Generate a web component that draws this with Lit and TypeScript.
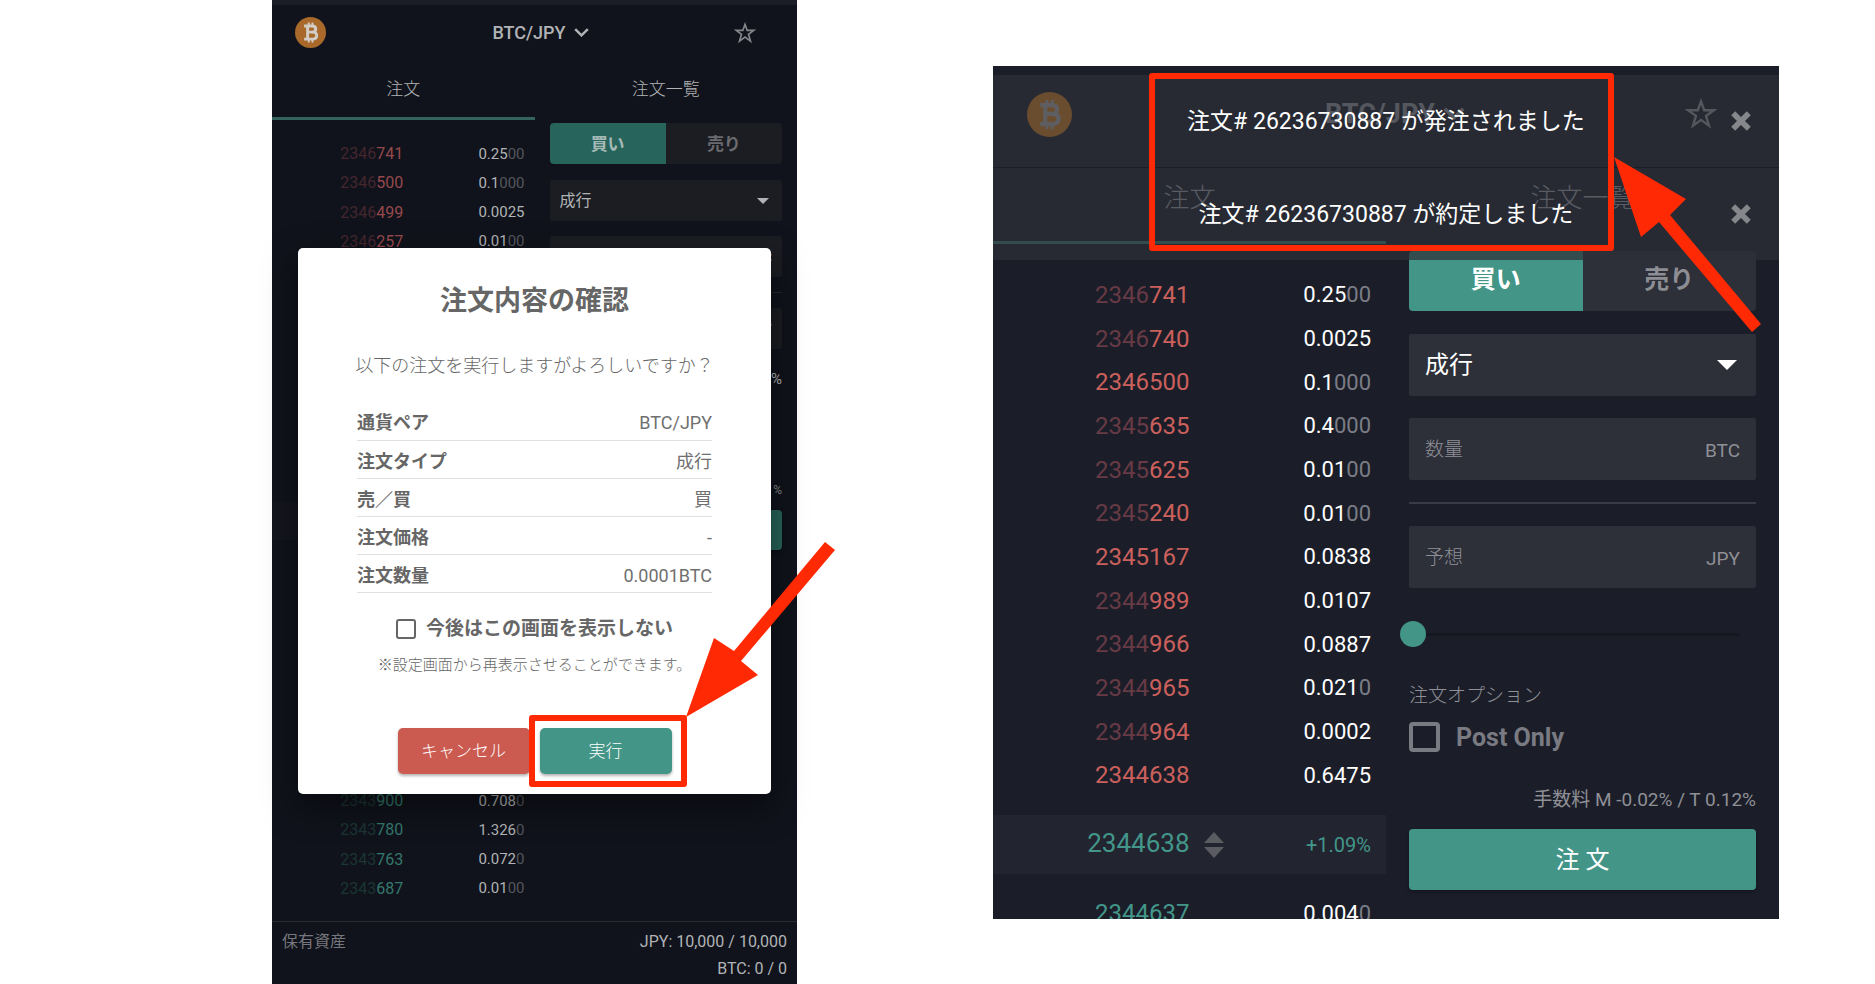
import { LitElement, html, css } from "lit";
import { customElement } from "lit/decorators.js";

// [faded price digits, bright price digits, size, trailing zeros of the size]
type Row = [string, string, string, string];

const leftAsks: Row[] = [
  ["2346", "741", "0.25", "00"],
  ["2346", "500", "0.1", "000"],
  ["2346", "499", "0.0025", ""],
  ["2346", "257", "0.01", "00"],
];
const leftBids: Row[] = [
  ["2343", "900", "0.708", "0"],
  ["2343", "780", "1.326", "0"],
  ["2343", "763", "0.072", "0"],
  ["2343", "687", "0.01", "00"],
];
const rightAsks: Row[] = [
  ["2346", "741", "0.25", "00"],
  ["2346", "740", "0.0025", ""],
  ["", "2346500", "0.1", "000"],
  ["2345", "635", "0.4", "000"],
  ["2345", "625", "0.01", "00"],
  ["2345", "240", "0.01", "00"],
  ["", "2345167", "0.0838", ""],
  ["2344", "989", "0.0107", ""],
  ["2344", "966", "0.0887", ""],
  ["2344", "965", "0.021", "0"],
  ["2344", "964", "0.0002", ""],
  ["", "2344638", "0.6475", ""],
];
const rightBids: Row[] = [["", "2344637", "0.004", "0"]];

const details: [string, string][] = [
  ["通貨ペア", "BTC/JPY"],
  ["注文タイプ", "成行"],
  ["売／買", "買"],
  ["注文価格", "-"],
  ["注文数量", "0.0001BTC"],
];

const coin = html`<svg class="coin" viewBox="0 0 32 32" aria-hidden="true">
  <circle cx="16" cy="16" r="16" class="coin-disc" />
  <g fill="none" class="coin-mark" stroke-width="3">
    <path d="M9.4 9.3H17.6C20.4 9.3 21.4 10.8 21.4 12.4C21.4 14.3 20.2 15.6 17.8 15.6H13.4M17.8 15.6C21 15.6 22.4 17.1 22.4 19.1C22.4 21.4 20.8 22.8 18 22.8H9.4M13 9.3V22.8" />
    <path d="M14.2 5.6V9.6M18 5.6V9.6M14.2 22.4V26.4M18 22.4V26.4" stroke-width="2" />
  </g>
</svg>`;

const star = html`<svg class="star-svg" viewBox="0 0 24 24" fill="none" stroke="currentColor" stroke-width="1.8" aria-hidden="true">
  <path d="M12 2.6L14.4 9.2H21.6L15.8 13.4L18 20.8L12 16.4L6 20.8L8.2 13.4L2.4 9.2H9.6Z" />
</svg>`;

const chevron = html`<svg class="chevron" viewBox="0 0 15 9" fill="none" stroke="currentColor" stroke-width="2.4" aria-hidden="true">
  <path d="M1.2 1.2L7.5 7.4L13.8 1.2" />
</svg>`;

const cross = html`<svg class="cross" viewBox="0 0 20 20" stroke="currentColor" stroke-width="5.6" aria-hidden="true">
  <path d="M2.2 2.2L17.8 17.8M17.8 2.2L2.2 17.8" />
</svg>`;

@customElement("app-root")
export class AppRoot extends LitElement {
  static styles = css`
    :host {
      display: grid;
      grid-template-columns: 272fr 525fr 196fr 786fr 96fr;
      align-items: start;
      min-height: 100vh;
      background: #fff;
      font-family: Roboto, "Noto Sans CJK JP", sans-serif;
      overflow: hidden;
    }
    * { box-sizing: border-box; }
    button, input, select {
      font: inherit;
      color: inherit;
      margin: 0;
      padding: 0;
      border: 0;
      background: none;
    }
    svg { display: block; flex: none; }

    .screen {
      position: relative;
      display: flex;
      flex-direction: column;
      background: var(--bg);
      color: var(--text);
    }
    .before {
      grid-column: 2;
      min-height: 100vh;
      border-top: 5px solid #1b1e29;
      --bg: #10131b;
      --text: #b2b3b6;
      --muted: #85868a;
      --faint: #55575e;
      --ask: #96494d;
      --ask-dim: #45262f;
      --bid: #34776c;
      --bid-dim: #1b3534;
      --green: #27645b;
      --field: #1b1d22;
      --rule: #25272d;
      --band: #14161d;
      --disc: #a8692a;
      --coin: 31px;
      --edge: 23px;
      --star: 22px;
      --star-gap: 18px;
      --title: 18px;
      --title-shift: 12px;
      --head-h: 55px;
      --tab-h: 60px;
      --tab: 17px;
      --price: 16px;
      --size: 15px;
      --pad: 10px;
      --gap: 15px;
      --form-pad: 3px 15px 0;
      --seg-h: 41px;
      --seg: 17px;
      --field-h: 41px;
      --field-pad: 10px;
      --small: 14px;
      --lift: 3px;
    }
    .after {
      grid-column: 4;
      height: 853px;
      margin-top: 66px;
      --bg: #1b1e29;
      --text: #fff;
      --muted: #8f9096;
      --faint: #7b7d86;
      --ask: #cb605c;
      --ask-dim: #673a45;
      --bid: #43968a;
      --bid-dim: #2b5a58;
      --green: #439587;
      --field: #2d2f39;
      --rule: #393b46;
      --band: #22242f;
      --disc: #f7931a;
      --coin: 45px;
      --edge: 34px;
      --star: 32px;
      --star-gap: 28px;
      --title: 27px;
      --title-shift: 18px;
      --head-h: 80px;
      --tab-h: 90px;
      --tab: 26px;
      --price: 24px;
      --size: 22px;
      --pad: 15px;
      --gap: 22px;
      --form-pad: 7px 23px 0;
      --seg-h: 60px;
      --seg: 25px;
      --field-h: 62px;
      --field-pad: 16px;
      --small: 19px;
      --lift: 4px;
    }
    .clip {
      display: flex;
      flex-direction: column;
      flex: 1;
      min-height: 0;
      overflow: hidden;
    }
    .after .clip { padding-top: 8px; }

    .head {
      display: grid;
      grid-template-columns: 1fr auto 1fr;
      align-items: center;
      flex: none;
      height: var(--head-h);
      padding: 0 var(--edge);
    }
    .coin { width: var(--coin); height: var(--coin); }
    .coin-disc { fill: var(--disc); }
    .coin-mark { stroke: #d2cdc6; }
    .pair {
      display: flex;
      align-items: center;
      gap: 8px;
      padding-left: var(--title-shift);
      font-size: var(--title);
      font-weight: 500;
    }
    .after .pair { font-weight: 700; color: #b4b4b8; }
    .chevron { width: 15px; }
    .after .chevron { width: 22px; }
    .star { justify-self: end; margin-right: var(--star-gap); color: var(--muted); }
    .after .star { color: #b4b4b8; }
    .star-svg { width: var(--star); height: var(--star); }

    .tabs { display: grid; grid-template-columns: 1fr 1fr; flex: none; height: var(--tab-h); }
    .tab { padding-bottom: var(--lift); border-bottom: 3px solid transparent; font-size: var(--tab); font-weight: 300; }
    .after .tab { color: #c4c4c8; }
    .tab.on { border-color: #34625f; }
    .after .tab.on { border-color: #439587; }

    .body { display: grid; grid-template-columns: minmax(0, 1fr) minmax(0, 1fr); flex: 1; }
    .book { display: flex; flex-direction: column; min-width: 0; }
    .before .book { justify-content: space-between; padding: 19px 0 18px; }
    .after .book { padding-top: 29px; }
    .rows { display: flex; flex-direction: column; flex: none; }
    .before .rows { height: 117px; }
    .after .asks { height: 524px; }
    .after .bids { height: 44px; margin-top: 17px; }
    .row, .ticker {
      display: grid;
      grid-template-columns: 50% 1fr;
      align-items: center;
      flex: 1;
      text-align: right;
      font-size: var(--size);
    }
    .amount { padding-right: var(--pad); }
    .price { font-size: var(--price); }
    .asks .price { color: var(--ask); }
    .asks .price .dim { color: var(--ask-dim); }
    .bids .price { color: var(--bid); }
    .bids .price .dim { color: var(--bid-dim); }
    .amount .dim { color: var(--faint); }
    .ticker {
      flex: none;
      height: 38px;
      background: var(--band);
      color: var(--bid);
    }
    .after .ticker {
      grid-template-columns: 50% auto 1fr;
      height: 59px;
      margin-top: 18px;
      font-size: 20px;
    }
    .last { padding-bottom: 4px; font-size: 26px; }
    .sorter { width: 20px; margin-left: 14px; }

    .form { display: flex; flex-direction: column; gap: var(--gap); padding: var(--form-pad); }
    .seg { display: grid; grid-template-columns: 1fr 1fr; height: var(--seg-h); margin-bottom: 1px; border-radius: 4px; overflow: hidden; }
    .seg-btn { padding-bottom: var(--lift); background: var(--field); color: #6a6b6f; font-size: var(--seg); font-weight: 700; }
    .after .seg-btn { padding-bottom: 8px; color: #8d8e93; }
    .seg-btn.on { background: var(--green); color: #a5bab7; }
    .after .seg-btn.on { color: #fff; }
    .field {
      display: flex;
      align-items: center;
      height: var(--field-h);
      padding: 0 var(--field-pad);
      border-radius: 2px;
      background: var(--field);
      color: var(--muted);
      font-size: var(--small);
    }
    .name { padding-bottom: var(--lift); font-weight: 300; }
    .unit { padding-top: 2px; }
    .input { flex: 1; min-width: 0; }
    .choice { position: relative; color: var(--text); font-size: var(--price); }
    .select { flex: 1; appearance: none; }
    .caret { position: absolute; right: 13px; width: 12px; pointer-events: none; }
    .after .caret { right: 19px; width: 20px; }
    .rule { width: 100%; height: 1px; margin: 0; border: 0; background: var(--rule); }
    .after .rule { height: 2px; }
    .percent { padding-top: 5px; line-height: 20px; font-size: 15px; text-align: right; }
    .small-fee { margin-top: 76px; color: var(--muted); font-size: 12px; line-height: 20px; text-align: right; }
    .submit {
      width: 100%;
      height: 61px;
      padding-bottom: 4px;
      border-radius: 4px;
      background: var(--green);
      box-shadow: 0 2px 4px rgba(0, 0, 0, 0.3);
      font-size: 24px;
    }
    .before .submit { height: 40px; margin-top: -5px; }
    .slider {
      appearance: none;
      height: 48px;
      margin: 0 16px 2px -9px;
      background: transparent;
    }
    .slider::-webkit-slider-runnable-track { height: 3px; background: #151821; }
    .slider::-webkit-slider-thumb {
      appearance: none;
      width: 26px;
      height: 26px;
      margin-top: -12px;
      border-radius: 50%;
      background: var(--green);
    }
    .option { display: flex; flex-direction: column; gap: 12px; }
    .caption { margin: 0; color: var(--muted); font-size: var(--small); font-weight: 300; line-height: 28px; }
    .check { display: flex; align-items: center; gap: 16px; height: 30px; color: #7a7b82; font-size: 25px; font-weight: 700; }
    .box { appearance: none; flex: none; width: 31px; height: 30px; border: 4px solid #7a7b82; border-radius: 4px; }
    .pay { display: flex; flex-direction: column; gap: 15px; padding-top: 12px; }
    .fee { margin: 0; color: var(--muted); font-size: 19px; line-height: 28px; text-align: right; white-space: nowrap; }

    .assets {
      display: flex;
      justify-content: space-between;
      flex: none;
      padding: 6px 10px 2px;
      border-top: 1px solid #292b31;
      font-size: 16px;
      line-height: 27px;
    }
    .assets-name { color: #76777c; }
    .assets-sum { text-align: right; }

    .modal {
      position: absolute;
      top: 243px;
      left: 26px;
      right: 26px;
      display: flex;
      flex-direction: column;
      align-items: center;
      padding: 33px 59px 20px;
      border-radius: 5px;
      background: #fff;
      box-shadow: 0 12px 32px rgba(0, 0, 0, 0.5);
      color: #666;
      font-size: 18px;
    }
    .modal-title { margin: 0; font-size: 27px; font-weight: 700; line-height: 40px; }
    .ask { margin: 31px 0 22px; font-weight: 300; line-height: 28px; white-space: nowrap; }
    .details { width: 100%; border-collapse: collapse; line-height: 33px; }
    .details th, .details td { height: 38px; padding: 4px 0 0; border-bottom: 1px solid #e0e0e0; }
    .details th { text-align: left; font-weight: 700; }
    .details td { text-align: right; color: #707070; }
    .skip { display: flex; align-items: center; gap: 10px; margin-top: 22px; font-size: 19px; font-weight: 700; line-height: 28px; }
    .skip .box { width: 20px; height: 20px; border-width: 2px; border-color: #666; border-radius: 3px; }
    .note { margin: 10px 0 0; font-size: 15px; font-weight: 300; line-height: 24px; white-space: nowrap; }
    .actions { display: flex; gap: 10px; margin-top: 51px; }
    .act {
      width: 132px;
      height: 46px;
      padding-bottom: 3px;
      border-radius: 5px;
      box-shadow: 0 2px 3px rgba(0, 0, 0, 0.3);
      color: #fff;
      font-size: 17px;
      font-weight: 300;
    }
    .act.no { background: #cb5a50; }
    .act.yes { background: #439587; }
    .target { position: relative; }
    .frame { position: absolute; border: 6px solid #ff2a04; border-radius: 3px; pointer-events: none; }
    .target .frame { inset: -13px -15px -13px -11px; }
    .arrow { position: absolute; overflow: visible; fill: #ff2a04; }
    .target .arrow { left: 146px; top: -186px; width: 149px; height: 175px; }

    .toasts { position: absolute; top: 9px; left: 0; right: 0; display: flex; flex-direction: column; gap: 1px; }
    .toast {
      display: grid;
      grid-template-columns: 1fr auto 1fr;
      align-items: center;
      height: 92px;
      padding: 0 28px;
      background: rgba(44, 47, 55, 0.7);
      font-size: 23px;
    }
    .toast-text { grid-column: 2; margin: 0; padding-bottom: 4px; white-space: nowrap; }
    .close { justify-self: end; color: #86878a; }
    .cross { width: 20px; height: 20px; }
    .after > .frame { top: 7px; left: 156px; right: 165px; height: 178px; }
    .after > .arrow { right: 17px; top: 91px; width: 148px; height: 176px; }
  `;

  private row = ([dim, price, size, zeros]: Row) => html`
    <div class="row">
      <span class="price"><span class="dim">${dim}</span>${price}</span>
      <span class="amount">${size}<span class="dim">${zeros}</span></span>
    </div>`;

  private head() {
    return html`
      <header class="head">
        ${coin}
        <button class="pair">BTC/JPY ${chevron}</button>
        <button class="star" aria-label="お気に入り">${star}</button>
      </header>
      <nav class="tabs">
        <button class="tab on">注文</button>
        <button class="tab">注文一覧</button>
      </nav>`;
  }

  private fields() {
    return html`
      <div class="seg">
        <button class="seg-btn on">買い</button>
        <button class="seg-btn">売り</button>
      </div>
      <div class="field choice">
        <select class="select" aria-label="注文タイプ"><option>成行</option></select>
        <svg class="caret" viewBox="0 0 12 6" fill="currentColor" aria-hidden="true"><path d="M0 0H12L6 6Z" /></svg>
      </div>
      <label class="field"><span class="name">数量</span><input class="input" type="text" /><span class="unit">BTC</span></label>
      <hr class="rule" />
      <label class="field"><span class="name">予想</span><input class="input" type="text" /><span class="unit">JPY</span></label>`;
  }

  private modal() {
    return html`
      <section class="modal" role="dialog" aria-labelledby="confirm-title">
        <h2 class="modal-title" id="confirm-title">注文内容の確認</h2>
        <p class="ask">以下の注文を実行しますがよろしいですか？</p>
        <table class="details">
          <tbody>
            ${details.map(([k, v]) => html`<tr><th scope="row">${k}</th><td>${v}</td></tr>`)}
          </tbody>
        </table>
        <label class="skip"><input class="box" type="checkbox" />今後はこの画面を表示しない</label>
        <p class="note">※設定画面から再表示させることができます。</p>
        <div class="actions">
          <button class="act no">キャンセル</button>
          <div class="target">
            <button class="act yes">実行</button>
            <div class="frame"></div>
            <svg class="arrow" viewBox="0 0 149 175" aria-hidden="true">
              <path d="M0 175L28 96L48 109L139 0L149 8L55 119L72 133Z" />
            </svg>
          </div>
        </div>
      </section>`;
  }

  private toast(text: string) {
    return html`<div class="toast" role="status">
      <p class="toast-text">${text}</p>
      <button class="close" aria-label="閉じる">${cross}</button>
    </div>`;
  }

  render() {
    return html`
      <section class="screen before">
        <div class="clip">
          ${this.head()}
          <div class="body">
            <div class="book">
              <div class="rows asks">${leftAsks.map(this.row)}</div>
              <div class="ticker"></div>
              <div class="rows bids">${leftBids.map(this.row)}</div>
            </div>
            <div class="form">
              ${this.fields()}
              <div class="percent">%</div>
              <div class="small-fee">%</div>
              <button class="submit" aria-label="注文"></button>
            </div>
          </div>
          <footer class="assets">
            <span class="assets-name">保有資産</span>
            <div class="assets-sum">
              <div>JPY: 10,000 / 10,000</div>
              <div>BTC: 0 / 0</div>
            </div>
          </footer>
        </div>
        ${this.modal()}
      </section>

      <section class="screen after">
        <div class="clip">
          ${this.head()}
          <div class="body">
            <div class="book">
              <div class="rows asks">${rightAsks.map(this.row)}</div>
              <div class="ticker">
                <span class="last">2344638</span>
                <svg class="sorter" viewBox="0 0 20 26" fill="#5b5c61" aria-hidden="true">
                  <path d="M10 0L20 11H0ZM0 15H20L10 26Z" />
                </svg>
                <span class="amount">+1.09%</span>
              </div>
              <div class="rows bids">${rightBids.map(this.row)}</div>
            </div>
            <div class="form">
              ${this.fields()}
              <input class="slider" type="range" min="0" max="100" value="0" aria-label="数量の割合" />
              <div class="option">
                <p class="caption">注文オプション</p>
                <label class="check"><input class="box" type="checkbox" />Post Only</label>
              </div>
              <div class="pay">
                <p class="fee">手数料 M -0.02% / T 0.12%</p>
                <button class="submit">注 文</button>
              </div>
            </div>
          </div>
        </div>
        <div class="toasts">
          ${this.toast("注文# 26236730887 が発注されました")}
          ${this.toast("注文# 26236730887 が約定しました")}
        </div>
        <div class="frame"></div>
        <svg class="arrow" viewBox="0 0 148 176" aria-hidden="true">
          <path d="M0 0L72 42L56 58L147 167L138 175L45 65L27 80Z" />
        </svg>
      </section>`;
  }
}
